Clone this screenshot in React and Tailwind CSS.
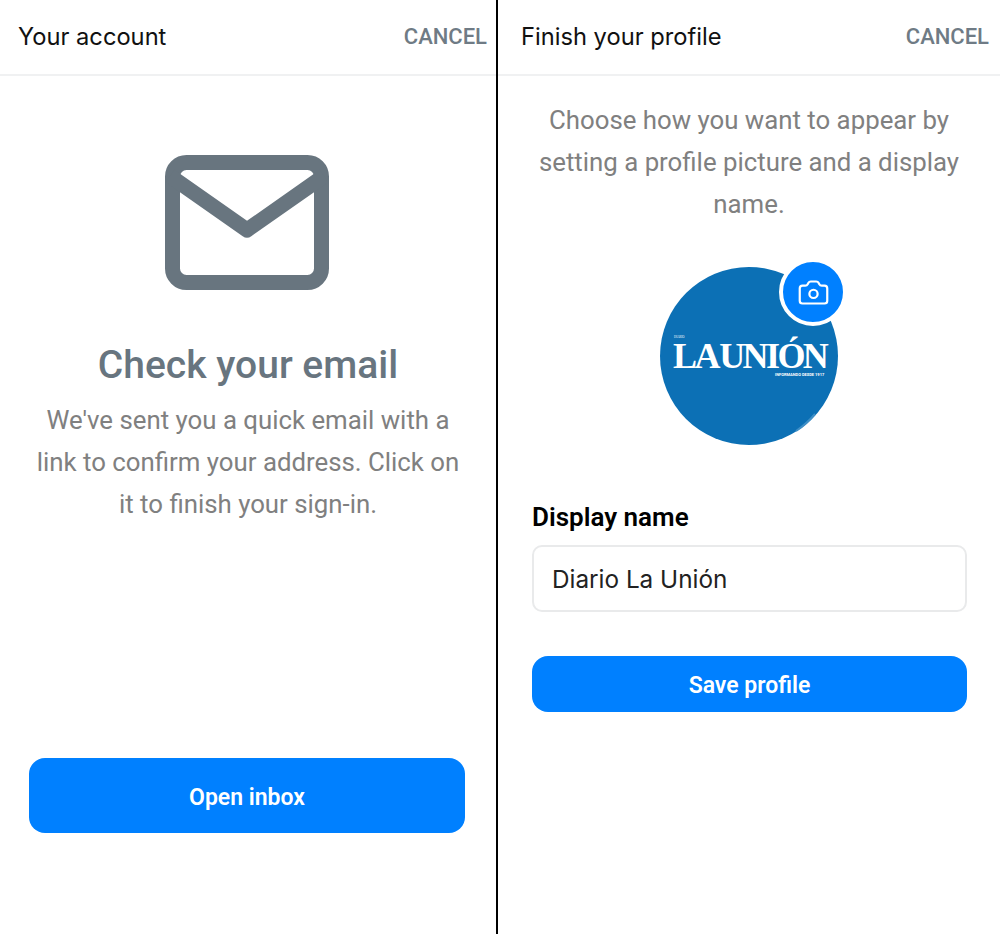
import React from "react";
import { Camera } from "lucide-react";

function Header({ title, className }) {
  return (
    <div className={"flex h-[76px] shrink-0 items-start justify-between border-b-2 border-[#f0f1f2] pt-[20px] " + className}>
      <span className="font-['Inter',sans-serif] text-[23.7px] leading-[33px] text-[#111]">{title}</span>
      <span className="pt-[1px] font-['Roboto',sans-serif] text-[22px] font-medium leading-[32px] text-[#6f7b85]">CANCEL</span>
    </div>
  );
}

function MailIcon() {
  return (
    <svg className="mr-[2px]" width="164" height="135" viewBox="0 0 164 135" fill="none" stroke="#68757f" strokeWidth="15">
      <rect x="7.5" y="7.5" width="149" height="120" rx="14" />
      <path d="M5 21 L82 75 L159 21" strokeLinejoin="round" />
    </svg>
  );
}

function PrimaryButton({ label, className }) {
  return (
    <button className={"w-full bg-[#0080ff] font-['Roboto',sans-serif] text-[23px] font-semibold text-white " + className}>
      {label}
    </button>
  );
}

function Avatar() {
  return (
    <div className="relative h-[178px] w-[178px] rounded-full bg-[#0c70b5]">
      <svg className="absolute inset-0" width="178" height="178" viewBox="0 0 178 178" fill="none">
        <path d="M136 164 A88 88 0 0 0 155 147" stroke="#3f8fc6" strokeWidth="2" />
      </svg>
      <div className="absolute left-[14px] top-[68px] font-['Liberation_Serif',serif] text-[3px] leading-[4px] text-white">
        DIARIO
      </div>
      <div className="absolute left-[13px] top-[74px] font-['Liberation_Serif',serif] text-[36px] font-bold leading-[30px] tracking-[-2.6px] [word-spacing:-3px] whitespace-nowrap text-white">
        LA UNIÓN
      </div>
      <div className="absolute left-[115px] top-[105px] font-['Roboto',sans-serif] text-[4px] font-bold leading-[5px] whitespace-nowrap text-white">
        INFORMANDO DESDE 1917
      </div>
      <div className="absolute -right-[9px] -top-[9px] flex h-[68px] w-[68px] items-center justify-center rounded-full border-4 border-white bg-[#0080ff]">
        <Camera size={33} strokeWidth={1.6} color="white" />
      </div>
    </div>
  );
}

export default function App() {
  return (
    <div className="flex h-[934px] w-[1000px] bg-white font-['Roboto',sans-serif]">
      <div className="flex w-[496px] flex-col">
        <Header title="Your account" className="pl-[18px] pr-[9px]" />
        <div className="flex flex-col items-center pt-[79px]">
          <MailIcon />
          <h1 className="mt-[50px] text-[39px] font-medium leading-[50px] text-[#68757f]">Check your email</h1>
          <p className="mt-[9px] w-[430px] text-center text-[25.8px] leading-[42px] text-[#808080]">
            We've sent you a quick email with a link to confirm your address. Click on it to finish your sign-in.
          </p>
        </div>
        <div className="mt-[233px] pl-[29px] pr-[31px]">
          <PrimaryButton label="Open inbox" className="h-[75px] rounded-[16px] pt-[6px]" />
        </div>
      </div>
      <div className="w-[2px] bg-black" />
      <div className="flex flex-1 flex-col">
        <Header title="Finish your profile" className="pl-[23px] pr-[11px]" />
        <p className="mx-auto mt-[23px] w-[440px] text-center text-[25.8px] leading-[42px] text-[#808080]">
          Choose how you want to appear by setting a profile picture and a display name.
        </p>
        <div className="mt-[42px] flex justify-center">
          <Avatar />
        </div>
        <div className="mt-[54px] pl-[34px] pr-[33px]">
          <div className="text-[26px] font-semibold leading-[36px] text-black">Display name</div>
          <div className="mt-[10px] flex h-[67px] items-center rounded-[10px] border-2 border-[#e9eaeb] pl-[18px] pt-[2px] font-['Inter',sans-serif] text-[24.3px] text-[#222]">
            Diario La Unión
          </div>
          <PrimaryButton label="Save profile" className="mt-[44px] h-[56px] rounded-[16px] pt-[4px]" />
        </div>
      </div>
    </div>
  );
}
